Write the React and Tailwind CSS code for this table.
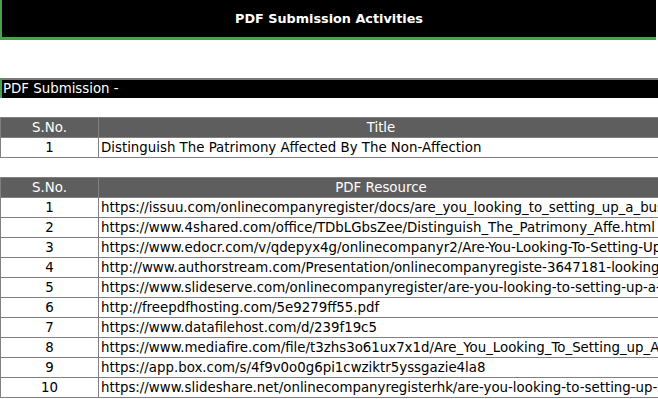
import React from 'react';

const resources = [
  'https://issuu.com/onlinecompanyregister/docs/are_you_looking_to_setting_up_a_business_in_hong_kong',
  'https://www.4shared.com/office/TDbLGbsZee/Distinguish_The_Patrimony_Affe.html',
  'https://www.edocr.com/v/qdepyx4g/onlinecompanyr2/Are-You-Looking-To-Setting-Up-A-Business',
  'http://www.authorstream.com/Presentation/onlinecompanyregiste-3647181-looking-setting-business',
  'https://www.slideserve.com/onlinecompanyregister/are-you-looking-to-setting-up-a-business',
  'http://freepdfhosting.com/5e9279ff55.pdf',
  'https://www.datafilehost.com/d/239f19c5',
  'https://www.mediafire.com/file/t3zhs3o61ux7x1d/Are_You_Looking_To_Setting_up_A_Business.pdf/file',
  'https://app.box.com/s/4f9v0o0g6pi1cwziktr5yssgazie4la8',
  'https://www.slideshare.net/onlinecompanyregisterhk/are-you-looking-to-setting-up-a-business',
];

const th = 'border border-[#808080] bg-[#5e5e5e] text-white font-normal h-[20px] p-0 leading-[19px]';
const td = 'border border-[#808080] h-[20px] p-0 leading-[19px]';

const DataTable = ({ heading, rows }) => (
  <table className="w-[664px] border-collapse table-fixed">
    <thead>
      <tr>
        <th className={`${th} w-[98px]`}>S.No.</th>
        <th className={th}>{heading}</th>
      </tr>
    </thead>
    <tbody>
      {rows.map((row, i) => (
        <tr key={i}>
          <td className={`${td} text-center`}>{i + 1}</td>
          <td className={`${td} pl-[2px] whitespace-nowrap overflow-hidden`}>{row}</td>
        </tr>
      ))}
    </tbody>
  </table>
);

export default function App() {
  return (
    <div className="w-[658px] h-[399px] overflow-hidden bg-white text-black text-[13.35px] font-['DejaVu_Sans',Verdana,sans-serif]">
      {/* Page title */}
      <div className="w-[656px] h-[40px] bg-black border-l-2 border-b-[3px] border-[#46a34a] flex items-center justify-center">
        <h1 className="text-white font-bold text-[12.8px] pt-px">PDF Submission Activities</h1>
      </div>

      <div className="h-[38px]" />

      {/* Section bar */}
      <div className="w-[664px] h-[20px] bg-black text-white border-t-2 border-l-2 border-t-[#7a7a7a] border-l-[#46a34a] pl-[1px] leading-[18px]">
        PDF Submission -
      </div>

      <div className="h-[19px]" />

      <DataTable heading="Title" rows={['Distinguish The Patrimony Affected By The Non-Affection']} />

      <div className="h-[19px]" />

      <DataTable heading="PDF Resource" rows={resources} />
    </div>
  );
}
